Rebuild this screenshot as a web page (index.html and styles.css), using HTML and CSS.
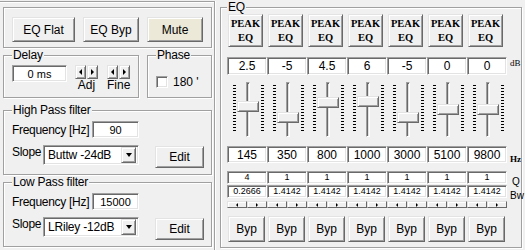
FILE: index.html
```html
<!DOCTYPE html>
<html>
<head>
<title>EQ Settings</title>
<meta name="viewport" content="width=device-width, initial-scale=1">

<link rel="stylesheet" href="styles.css">
</head>
<body>
<div id="main">
    <div id="left">
        <fieldset class="box" id="top-buttons">
            <button class="btn" id="eq-flat">EQ Flat</button>
            <button class="btn" id="eq-byp">EQ Byp</button>
            <button class="btn" id="mute">Mute</button>
        </fieldset>

        <div id="delay-phase">
            <fieldset class="box" id="delay">
                <legend>Delay</legend>
                <div class="delay-row">
                    <input type="text" class="edit" id="delay-ms" value="0 ms">
                    <div class="spin" id="adj">
                        <div class="spin-btns"><span class="spin-btn arrow-l"></span><span class="spin-btn arrow-r"></span></div>
                        <span>Adj</span>
                    </div>
                    <div class="spin" id="fine">
                        <div class="spin-btns"><span class="spin-btn arrow-l"></span><span class="spin-btn arrow-r"></span></div>
                        <span>Fine</span>
                    </div>
                </div>
            </fieldset>
            <fieldset class="box" id="phase">
                <legend>Phase</legend>
                <div class="check-row">
                    <span class="checkbox"></span>
                    <span>180 '</span>
                </div>
            </fieldset>
        </div>

        <fieldset class="box filter" id="high-pass">
            <legend>High Pass filter</legend>
            <div class="freq-row">
                <label for="hp-freq">Frequency [Hz]</label>
                <input type="text" class="edit freq" id="hp-freq" value="90">
            </div>
            <div class="slope-row">
                <span class="slope-label">Slope</span>
                <div class="combo"><span>Buttw -24dB</span><span class="drop"></span></div>
                <button class="btn edit-btn">Edit</button>
            </div>
        </fieldset>

        <fieldset class="box filter" id="low-pass">
            <legend>Low Pass filter</legend>
            <div class="freq-row">
                <label for="lp-freq">Frequency [Hz]</label>
                <input type="text" class="edit freq" id="lp-freq" value="15000">
            </div>
            <div class="slope-row">
                <span class="slope-label">Slope</span>
                <div class="combo"><span>LRiley -12dB</span><span class="drop"></span></div>
                <button class="btn edit-btn">Edit</button>
            </div>
        </fieldset>
    </div>

    <fieldset class="box" id="eq">
        <legend>EQ</legend>

        <div class="eq-row presets">
            <button class="btn preset">PEAK<br>EQ</button>
            <button class="btn preset">PEAK<br>EQ</button>
            <button class="btn preset">PEAK<br>EQ</button>
            <button class="btn preset">PEAK<br>EQ</button>
            <button class="btn preset">PEAK<br>EQ</button>
            <button class="btn preset">PEAK<br>EQ</button>
            <button class="btn preset">PEAK<br>EQ</button>
        </div>

        <div class="eq-row gains">
            <input type="text" class="edit eq-edit" value="2.5">
            <input type="text" class="edit eq-edit" value="-5">
            <input type="text" class="edit eq-edit" value="4.5">
            <input type="text" class="edit eq-edit" value="6">
            <input type="text" class="edit eq-edit" value="-5">
            <input type="text" class="edit eq-edit" value="0">
            <input type="text" class="edit eq-edit" value="0">
            <span class="eq-lbl db">dB</span>
        </div>

        <div class="eq-row sliders">
            <div class="slider"><span class="ticks"></span><span class="track"></span><span class="ticks right"></span><span class="thumb" style="top: 20px"></span></div>
            <div class="slider"><span class="ticks"></span><span class="track"></span><span class="ticks right"></span><span class="thumb" style="top: 31px"></span></div>
            <div class="slider"><span class="ticks"></span><span class="track"></span><span class="ticks right"></span><span class="thumb" style="top: 16px"></span></div>
            <div class="slider"><span class="ticks"></span><span class="track"></span><span class="ticks right"></span><span class="thumb" style="top: 15px"></span></div>
            <div class="slider"><span class="ticks"></span><span class="track"></span><span class="ticks right"></span><span class="thumb" style="top: 31px"></span></div>
            <div class="slider"><span class="ticks"></span><span class="track"></span><span class="ticks right"></span><span class="thumb" style="top: 23px"></span></div>
            <div class="slider"><span class="ticks"></span><span class="track"></span><span class="ticks right"></span><span class="thumb" style="top: 23px"></span></div>
        </div>

        <div class="eq-row freqs">
            <input type="text" class="edit eq-edit" value="145">
            <input type="text" class="edit eq-edit" value="350">
            <input type="text" class="edit eq-edit" value="800">
            <input type="text" class="edit eq-edit" value="1000">
            <input type="text" class="edit eq-edit" value="3000">
            <input type="text" class="edit eq-edit" value="5100">
            <input type="text" class="edit eq-edit" value="9800">
            <span class="eq-lbl hz">Hz</span>
        </div>

        <div class="eq-row small q">
            <input type="text" class="edit small-edit" value="4">
            <input type="text" class="edit small-edit" value="1">
            <input type="text" class="edit small-edit" value="1">
            <input type="text" class="edit small-edit" value="1">
            <input type="text" class="edit small-edit" value="1">
            <input type="text" class="edit small-edit" value="1">
            <input type="text" class="edit small-edit" value="1">
            <span class="eq-lbl q-lbl">Q</span>
        </div>

        <div class="eq-row small bw">
            <input type="text" class="edit small-edit" value="0.2666">
            <input type="text" class="edit small-edit" value="1.4142">
            <input type="text" class="edit small-edit" value="1.4142">
            <input type="text" class="edit small-edit" value="1.4142">
            <input type="text" class="edit small-edit" value="1.4142">
            <input type="text" class="edit small-edit" value="1.4142">
            <input type="text" class="edit small-edit" value="1.4142">
            <span class="eq-lbl bw-lbl">Bw</span>
        </div>

        <div class="eq-row scrolls">
            <div class="scroll"><span class="scroll-btn arrow-l"></span><span class="scroll-btn arrow-r"></span></div>
            <div class="scroll"><span class="scroll-btn arrow-l"></span><span class="scroll-btn arrow-r"></span></div>
            <div class="scroll"><span class="scroll-btn arrow-l"></span><span class="scroll-btn arrow-r"></span></div>
            <div class="scroll"><span class="scroll-btn arrow-l"></span><span class="scroll-btn arrow-r"></span></div>
            <div class="scroll"><span class="scroll-btn arrow-l"></span><span class="scroll-btn arrow-r"></span></div>
            <div class="scroll"><span class="scroll-btn arrow-l"></span><span class="scroll-btn arrow-r"></span></div>
            <div class="scroll"><span class="scroll-btn arrow-l"></span><span class="scroll-btn arrow-r"></span></div>
        </div>

        <div class="eq-row bypass">
            <button class="btn byp">Byp</button>
            <button class="btn byp">Byp</button>
            <button class="btn byp">Byp</button>
            <button class="btn byp">Byp</button>
            <button class="btn byp">Byp</button>
            <button class="btn byp">Byp</button>
            <button class="btn byp">Byp</button>
        </div>
    </fieldset>
</div>
</body>
</html>
```

FILE: styles.css
```css
body{
    margin: 0;
    width: 525px;
    height: 250px;
    overflow: hidden;
    background-color: #f0f0f0;
    font-family: "Liberation Sans", Arial, sans-serif;
    font-size: 11px;
    color: #000;
}

#main{
    display: flex;
    align-items: flex-start;
}

#left{
    width: 214px;
    height: 249px;
    margin-top: 1px;
    border-top: 1px solid #a0a0a0;
    border-right: 1px solid #a0a0a0;
    box-shadow: inset 0 1px #fff, 1px 0 #fff;
}

/* etched group boxes */
.box{
    box-sizing: border-box;
    margin: 0;
    min-inline-size: 0;
    border: 1px solid #a0a0a0;
    box-shadow: inset 1px 1px #fff, 1px 1px #fff;
}
.box legend{
    padding: 0 1px;
    line-height: 13px;
    font-size: 12px;
    letter-spacing: -0.2px;
    background-color: #f0f0f0;
}

/* 3d controls */
.btn{
    box-sizing: border-box;
    padding: 0;
    background-color: #f0f0f0;
    border: 1px solid;
    border-color: #e3e3e3 #696969 #696969 #e3e3e3;
    box-shadow: inset 1px 1px #fff, inset -1px -1px #a0a0a0;
    font-family: "Liberation Sans", Arial, sans-serif;
    font-size: 12px;
    color: #000;
}
.edit{
    box-sizing: border-box;
    margin: 0;
    padding: 0;
    background-color: #fff;
    border: 1px solid;
    border-color: #a0a0a0 #fff #fff #a0a0a0;
    box-shadow: inset 1px 1px #696969, inset -1px -1px #e3e3e3;
    font-family: "Liberation Sans", Arial, sans-serif;
    font-size: 11px;
    color: #000;
    text-align: center;
    outline: none;
}

.arrow-l::after, .arrow-r::after{
    content: "";
    border-top: 3px solid transparent;
    border-bottom: 3px solid transparent;
}
.arrow-l::after{
    border-right: 3px solid #000;
}
.arrow-r::after{
    border-left: 3px solid #000;
}

/* top buttons */
#top-buttons{
    display: flex;
    gap: 8px;
    width: 209px;
    height: 41px;
    margin: 5px 0 0 3px;
    padding: 9px 0 0 8px;
}
#top-buttons .btn{
    height: 25px;
    width: 56px;
}
#eq-flat{
    width: 63px !important;
}
#mute{
    background-color: #ece9d8;
}

/* delay + phase */
#delay-phase{
    display: flex;
    gap: 8px;
    margin: 1px 0 0 3px;
}
#delay{
    width: 136px;
    padding: 3px 0 2px 8px;
}
.delay-row{
    display: flex;
    align-items: flex-start;
    height: 30px;
}
#delay-ms{
    width: 55px;
    height: 17px;
}
.spin{
    display: flex;
    flex-direction: column;
    align-items: center;
    line-height: 12px;
    font-size: 12px;
}
#adj{
    margin-left: 8px;
}
#fine{
    margin-left: 9px;
}
.spin-btns{
    display: flex;
    gap: 1px;
}
.spin-btn{
    box-sizing: border-box;
    display: flex;
    align-items: center;
    justify-content: center;
    width: 11px;
    height: 14px;
    border: 1px solid;
    border-color: #e3e3e3 #696969 #696969 #e3e3e3;
    box-shadow: inset 1px 1px #fff, inset -1px -1px #a0a0a0;
}

#phase{
    width: 65px;
    padding: 3px 0 2px 8px;
}
.check-row{
    display: flex;
    height: 19px;
    margin-top: 11px;
    align-items: flex-start;
}
.checkbox{
    box-sizing: border-box;
    width: 12px;
    height: 12px;
    background-color: #fff;
    border: 1px solid;
    border-color: #a0a0a0 #fff #fff #a0a0a0;
    box-shadow: inset 1px 1px #696969, inset -1px -1px #e3e3e3;
}
.check-row span + span{
    margin-left: 5px;
    font-size: 12px;
    line-height: 12px;
}

/* filters */
.filter{
    width: 209px;
    margin-left: 3px;
    padding: 4px 0 6px 8px;
}
#high-pass{
    margin-top: 6px;
}
#low-pass{
    margin-top: 1px;
}
.freq-row{
    display: flex;
    align-items: center;
}
.freq-row label{
    width: 80px;
    font-size: 12px;
    letter-spacing: -0.3px;
}
.freq{
    width: 47px;
    height: 17px;
}
.slope-row{
    display: flex;
    align-items: flex-start;
    margin-top: 7px;
}
.slope-label{
    width: 31px;
    line-height: 14px;
    font-size: 12px;
    letter-spacing: -0.3px;
}
.combo{
    box-sizing: border-box;
    display: flex;
    align-items: center;
    justify-content: space-between;
    width: 96px;
    height: 20px;
    padding: 0 2px 0 4px;
    background-color: #fff;
    border: 1px solid;
    border-color: #a0a0a0 #fff #fff #a0a0a0;
    box-shadow: inset 1px 1px #696969, inset -1px -1px #e3e3e3;
    font-size: 12px;
    letter-spacing: -0.2px;
}
.drop{
    box-sizing: border-box;
    display: flex;
    align-items: center;
    justify-content: center;
    width: 15px;
    height: 16px;
    background-color: #f0f0f0;
    border: 1px solid;
    border-color: #e3e3e3 #696969 #696969 #e3e3e3;
    box-shadow: inset 1px 1px #fff, inset -1px -1px #a0a0a0;
}
.drop::after{
    content: "";
    border-left: 3px solid transparent;
    border-right: 3px solid transparent;
    border-top: 4px solid #000;
}
.edit-btn{
    width: 49px;
    height: 22px;
    margin: 1px 0 0 16px;
}

/* EQ */
#eq{
    width: 302px;
    height: 247px;
    margin: 1px 0 0 5px;
    padding: 0 0 3px 6px;
}
.eq-row{
    display: grid;
    grid-template-columns: repeat(7, 40px) 14px;
}
.presets{
    height: 33px;
}
.preset{
    width: 35px;
    height: 33px;
    margin-left: 1px;
    font-family: "Liberation Serif", "Times New Roman", serif;
    font-weight: bold;
    font-size: 10.5px;
    line-height: 14px;
}
.gains{
    margin-top: 10px;
    height: 18px;
}
.eq-edit{
    width: 40px;
    font-size: 12px;
}
.eq-lbl{
    padding-left: 3px;
    line-height: 10px;
}
.db{
    align-self: start;
    font-family: "Liberation Serif", serif;
    font-size: 9px;
    margin-top: 1px;
}
.sliders{
    margin-top: 6px;
    height: 57px;
}
.slider{
    position: relative;
    display: flex;
    align-items: flex-start;
    padding-left: 6px;
}
.ticks{
    width: 3px;
    height: 48px;
    margin-top: 4px;
    background: repeating-linear-gradient(to bottom, #000 0 1px, transparent 1px 3px);
}
.ticks.right{
    margin-left: 11px;
}
.track{
    box-sizing: border-box;
    width: 4px;
    height: 55px;
    margin: 1px 0 0 10px;
    background-color: #e3e3e3;
    border: 1px solid;
    border-color: #a0a0a0 #fff #fff #a0a0a0;
    box-shadow: inset 1px 1px #696969;
}
.thumb{
    position: absolute;
    left: 10px;
    box-sizing: border-box;
    width: 22px;
    height: 11px;
    background-color: #f0f0f0;
    border: 1px solid;
    border-color: #e3e3e3 #696969 #696969 #e3e3e3;
    box-shadow: inset 1px 1px #fff, inset -1px -1px #a0a0a0;
}
.freqs{
    margin-top: 8px;
    height: 17px;
}
.hz{
    align-self: end;
    font-family: "Liberation Serif", serif;
    font-weight: bold;
    font-size: 9px;
    margin-bottom: -1px;
}
.small{
    height: 13px;
}
.q{
    margin-top: 8px;
}
.bw{
    margin-top: 1px;
}
.small-edit{
    width: 40px;
    font-size: 9px;
    line-height: 11px;
}
.q-lbl, .bw-lbl{
    align-self: end;
    font-size: 10px;
    margin-bottom: -3px;
}
.q-lbl{
    padding-left: 5px;
}
.scrolls{
    margin-top: 3px;
    height: 7px;
}
.scroll{
    display: flex;
}
.scroll-btn{
    box-sizing: border-box;
    display: flex;
    align-items: center;
    justify-content: center;
    width: 20px;
    height: 7px;
    border: 1px solid;
    border-color: #e3e3e3 #696969 #696969 #e3e3e3;
    box-shadow: inset 1px 1px #fff;
}
.scroll-btn::after{
    border-top-width: 2px;
    border-bottom-width: 2px;
}
.arrow-l.scroll-btn::after{
    border-right-width: 2px;
}
.arrow-r.scroll-btn::after{
    border-left-width: 2px;
}
.bypass{
    margin-top: 8px;
}
.byp{
    width: 37px;
    height: 26px;
    margin-left: 1px;
    font-size: 12px;
}
```
